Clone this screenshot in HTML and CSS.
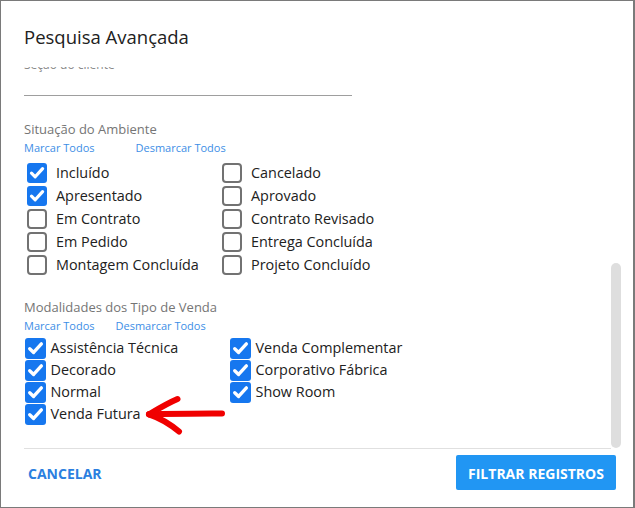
FILE: index.html
```html
<!DOCTYPE html>
<html lang="pt-BR">
<head>
<meta charset="utf-8">
<title>Pesquisa Avançada</title>
<link rel="stylesheet" href="styles.css">
</head>
<body>
<div class="frame">
  <header class="head">
    <h1 class="title">Pesquisa Avançada</h1>
  </header>

  <div class="main">
    <div class="scroll">
      <div class="field">
        <div class="field-label">Seção do cliente</div>
        <div class="field-input"></div>
      </div>

      <section class="group g1">
        <div class="group-title">Situação do Ambiente</div>
        <div class="links"><a class="link">Marcar Todos</a><a class="link">Desmarcar Todos</a></div>
        <div class="grid">
          <label class="item"><span class="box on"><svg viewBox="0 0 20 20"><path d="M4.5 10.2 L8.2 13.8 L15.6 5.6"/></svg></span><span class="lbl">Incluído</span></label>
          <label class="item"><span class="box"></span><span class="lbl">Cancelado</span></label>
          <label class="item"><span class="box on"><svg viewBox="0 0 20 20"><path d="M4.5 10.2 L8.2 13.8 L15.6 5.6"/></svg></span><span class="lbl">Apresentado</span></label>
          <label class="item"><span class="box"></span><span class="lbl">Aprovado</span></label>
          <label class="item"><span class="box"></span><span class="lbl">Em Contrato</span></label>
          <label class="item"><span class="box"></span><span class="lbl">Contrato Revisado</span></label>
          <label class="item"><span class="box"></span><span class="lbl">Em Pedido</span></label>
          <label class="item"><span class="box"></span><span class="lbl">Entrega Concluída</span></label>
          <label class="item"><span class="box"></span><span class="lbl">Montagem Concluída</span></label>
          <label class="item"><span class="box"></span><span class="lbl">Projeto Concluído</span></label>
        </div>
      </section>

      <section class="group g2">
        <div class="group-title">Modalidades dos Tipo de Venda</div>
        <div class="links"><a class="link">Marcar Todos</a><a class="link">Desmarcar Todos</a></div>
        <div class="grid">
          <label class="item"><span class="box on"><svg viewBox="0 0 20 20"><path d="M4.5 10.2 L8.2 13.8 L15.6 5.6"/></svg></span><span class="lbl">Assistência Técnica</span></label>
          <label class="item"><span class="box on"><svg viewBox="0 0 20 20"><path d="M4.5 10.2 L8.2 13.8 L15.6 5.6"/></svg></span><span class="lbl">Venda Complementar</span></label>
          <label class="item"><span class="box on"><svg viewBox="0 0 20 20"><path d="M4.5 10.2 L8.2 13.8 L15.6 5.6"/></svg></span><span class="lbl">Decorado</span></label>
          <label class="item"><span class="box on"><svg viewBox="0 0 20 20"><path d="M4.5 10.2 L8.2 13.8 L15.6 5.6"/></svg></span><span class="lbl">Corporativo Fábrica</span></label>
          <label class="item"><span class="box on"><svg viewBox="0 0 20 20"><path d="M4.5 10.2 L8.2 13.8 L15.6 5.6"/></svg></span><span class="lbl">Normal</span></label>
          <label class="item"><span class="box on"><svg viewBox="0 0 20 20"><path d="M4.5 10.2 L8.2 13.8 L15.6 5.6"/></svg></span><span class="lbl">Show Room</span></label>
          <label class="item"><span class="box on"><svg viewBox="0 0 20 20"><path d="M4.5 10.2 L8.2 13.8 L15.6 5.6"/></svg></span><span class="lbl">Venda Futura</span></label>
        </div>
      </section>
    </div>
    <div class="track"><div class="thumb"></div></div>
  </div>

  <footer class="foot">
    <a class="cancel">CANCELAR</a>
    <button class="primary">FILTRAR REGISTROS</button>
  </footer>

  <svg class="arrow" viewBox="140 392 92 45" width="92" height="45">
    <path d="M222 413.5 C200 413.2 176 413.8 149 414.3"/>
    <path d="M149 414.3 C158 409 167 403.5 177.5 399"/>
    <path d="M149 414.3 C160 418 169 423 179 431.5"/>
  </svg>
</div>
</body>
</html>
```

FILE: styles.css
```css
* { box-sizing: border-box; }

html, body {
  margin: 0;
  padding: 0;
  background: #fff;
}

body {
  font-family: "Open Sans", "Noto Sans", sans-serif;
  color: #212121;
}

.frame {
  position: relative;
  width: 635px;
  height: 508px;
  border: 1px solid #7a7a7a;
  border-right-width: 2px;
  display: flex;
  flex-direction: column;
  background: #fff;
}

.head {
  padding: 24px 23px 18px;
}

.title {
  margin: 0;
  font-size: 18.5px;
  line-height: 24px;
  font-weight: 500;
  color: #212121;
}

.main {
  display: flex;
  height: 382px;
  margin-left: 23px;
  margin-right: 12px;
}

.scroll {
  flex: 1;
  overflow: hidden;
  border-bottom: 1px solid #e0e0e0;
}

.track {
  width: 10px;
  display: flex;
  flex-direction: column;
  justify-content: flex-end;
  padding-bottom: 1px;
}

.thumb {
  height: 185px;
  background: #dedede;
  border-radius: 5px;
}

.field {
  margin-top: -10.5px;
  width: 328px;
}

.field-label {
  font-size: 12px;
  line-height: 16px;
  color: #8a8a8a;
}

.field-input {
  height: 23.5px;
  border-bottom: 1px solid #9e9e9e;
}

.group-title {
  font-size: 13px;
  line-height: 18px;
  color: #757575;
}

.g1 { margin-top: 24px; }
.g2 { margin-top: 21px; }

.links {
  margin-top: 2px;
  display: flex;
  font-size: 11px;
  line-height: 15px;
}

.link {
  color: #3d8ee6;
  cursor: pointer;
}

.g1 .link:first-child { margin-right: 41px; }
.g2 .link:first-child { margin-right: 21px; }

.grid {
  display: grid;
}

.g1 .grid {
  margin-top: 6.5px;
  padding-left: 3px;
  grid-template-columns: 195px 1fr;
  grid-auto-rows: 23px;
}

.g2 .grid {
  margin-top: 4.5px;
  padding-left: 1px;
  grid-template-columns: 205px 1fr;
  grid-auto-rows: 22px;
}

.item {
  display: flex;
  align-items: center;
  font-size: 14.4px;
  line-height: 20px;
  color: #212121;
}

.box {
  flex: none;
  width: 20px;
  height: 20px;
  border: 2px solid #727272;
  border-radius: 4px;
  background: #fff;
  display: flex;
}

.box.on {
  border: none;
  background: #1677ef;
  border-radius: 3px;
}

.g2 .box {
  width: 21px;
  height: 21px;
}

.box svg {
  width: 100%;
  height: 100%;
}

.box svg path {
  fill: none;
  stroke: #fff;
  stroke-width: 3.2;
  stroke-linecap: round;
  stroke-linejoin: round;
}

.g1 .lbl { margin-left: 9px; }
.g2 .lbl { margin-left: 4.5px; }

.foot {
  flex: 1;
  display: flex;
  justify-content: space-between;
  align-items: flex-start;
  padding: 6px 17px 0 27px;
}

.cancel {
  font-size: 14px;
  font-weight: 700;
  color: #2b7fe0;
  line-height: 37px;
  cursor: pointer;
}

.primary {
  width: 160px;
  height: 35px;
  border: none;
  border-radius: 2px;
  background: #2196f3;
  color: #fff;
  font-family: "Open Sans", "Noto Sans", sans-serif;
  font-size: 14px;
  font-weight: 700;
  padding: 2px 0 0;
}

.arrow {
  position: absolute;
  left: 139px;
  top: 391px;
  overflow: visible;
}

.arrow path {
  fill: none;
  stroke: #f00000;
  stroke-width: 6;
  stroke-linecap: round;
}
```
